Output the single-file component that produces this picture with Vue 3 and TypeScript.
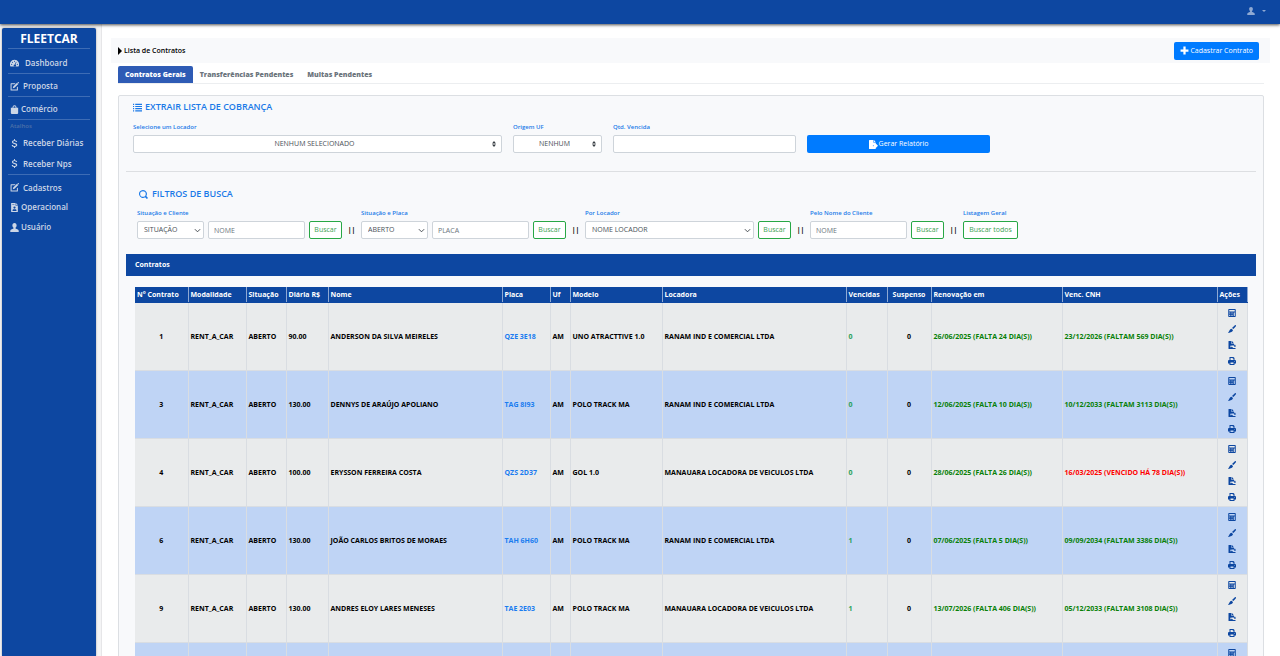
<script setup lang="ts">
import { ref } from 'vue'

interface Contract {
  id: number
  rate: string
  name: string
  plate: string
  model: string
  owner: string
  due: number
  renewal: string
  license: string
  expired?: boolean
}

interface MenuItem {
  label: string
  icon: string
  kind: string
}

const RANAM = 'RANAM IND E COMERCIAL LTDA'
const MANAUARA = 'MANAUARA LOCADORA DE VEICULOS LTDA'

const icons: Record<string, string> = {
  user: 'M8 0C5.600 0 4.200 1.800 4.200 4.200c0 1.800.8 3.400 2 4.300v1.200L2.200 11.400C1 12 .500 12.800.500 14v2h15v-2c0-1.200-.5-2-1.700-2.600l-4-1.700V8.500c1.200-.9 2-2.500 2-4.300C11.800 1.800 10.400 0 8 0z',
  gauge: 'M8 1.500a8 8 0 0 0-7 12h14a8 8 0 0 0-7-12zM8 3a1 1 0 1 1 0 2 1 1 0 0 1 0-2zM3 8.500a1 1 0 1 1 0 2 1 1 0 0 1 0-2zM4.500 4.800a1 1 0 1 1 0 2 1 1 0 0 1 0-2zM13 8.500a1 1 0 1 1 0 2 1 1 0 0 1 0-2zM10.600 5l1 .4-1.800 4.700a2 2 0 1 1-1.200-.4z',
  edit: 'M2 2h8L8.300 3.800H2.800v9.400h9.400V9.500L14 7.800V14a1 1 0 0 1-1 1H2a1 1 0 0 1-1-1V3a1 1 0 0 1 1-1zM12.500 1.200l2.300 2.300-6.800 6.800-3 .7.700-3zM13.200.500l.500-.4a1 1 0 0 1 1.200 0l1 1a1 1 0 0 1 0 1.300l-.4.400z',
  bag: 'M4.500 5V4a3.500 3.500 0 0 1 7 0v1H14.500v9a2 2 0 0 1-2 2h-9a2 2 0 0 1-2-2V5zm1.600 0h3.800V4a1.900 1.900 0 0 0-3.800 0z',
  dollar: 'M7.200 0h1.600v2c2 .2 3.600 1.200 3.900 3.200h-2.200c-.3-1-1.100-1.500-2.500-1.500-1.300 0-2.200.500-2.200 1.500 0 1.100 1.100 1.300 2.700 1.700 2.200.500 4.400 1.200 4.400 3.700 0 2-1.800 3.300-4.100 3.500V16H7.200v-1.900c-2.400-.2-4-1.500-4.200-3.600h2.200c.2 1.200 1.300 1.900 2.800 1.900s2.600-.6 2.600-1.700c0-1.200-1.200-1.600-2.900-2-2.100-.5-4.200-1.200-4.200-3.500C3.500 3.400 5.100 2.200 7.200 2z',
  fileUser: 'M2 0h8v5h4v10a1 1 0 0 1-1 1H3a1 1 0 0 1-1-1zm9 0 3 4h-3zM8 6a2 2 0 1 0 0 4 2 2 0 0 0 0-4zM4.500 14h7v-1c0-1.300-1-2-2-2h-3c-1 0-2 .7-2 2zM4 2v1h4V2z',
  list: 'M0 1.500h2v2H0zm4 0h12v2H4zM0 5.300h2v2H0zm4 0h12v2H4zM0 9.100h2v2H0zm4 0h12v2H4zM0 12.900h2v2H0zm4 0h12v2H4z',
  search: 'M7 0a7 7 0 1 0 3.800 12.900L14 16l2-2-3-3.300A7 7 0 0 0 7 0zm0 2a5 5 0 1 1 0 10A5 5 0 0 1 7 2z',
  plus: 'M6 1h4v5h5v4h-5v5H6v-5H1V6h5z',
  export: 'M1 0h7v5h4v4H7v2h5v4a1 1 0 0 1-1 1H1a1 1 0 0 1-1-1V1a1 1 0 0 1 1-1zm8 0 3 4H9zm3 6 4 4-4 4v-3H8V9h4z',
  calculator: 'M2 0h12a1.500 1.500 0 0 1 1.500 1.500v13A1.500 1.500 0 0 1 14 16H2a1.500 1.500 0 0 1-1.500-1.500v-13A1.500 1.500 0 0 1 2 0zm.500 2v3h11V2zm0 5v2h2V7zm4.500 0v2h2V7zm4.500 0v7h2V7zm-9 4.500v2.500h2v-2.500zm4.500 0v2.500h2v-2.500z',
  brush: 'M15.500.500c.7.800.6 1.500 0 2.400L10.800 8 8 6 13.300.900c.8-.8 1.500-1.100 2.200-.4zM7 7.400l2.900 2.500c-.2 2.600-2.500 4.300-4.600 4.700C3.600 15 2 15.800 0 16c.800-1.200 1.700-2.700 2.400-4.100C3.400 9.600 4.800 7.800 7 7.400z',
  sign: 'M1.500 0H7v6h5v2.500l-1.500 1.200-1-1-2 1.500-1.500-2-2 4.500h1.500l1-1.500 1 1.500h2l1 1.300H15V16H2a1 1 0 0 1-1-1V.500zM8 0l4 4.800H8zm5 7 2 1.200v4h-1.500L12 10z',
  printer: 'M3 0h8l2 2v4h1a2 2 0 0 1 2 2v5h-3v3H3v-3H0V8a2 2 0 0 1 2-2h1zm2 2v4h6V3.500H9.500V2zm0 9v3h6v-3zm8-3.200a.8.8 0 1 0 0 1.600.8.8 0 0 0 0-1.600z',
}

const actions = [
  { icon: 'calculator', label: 'Calcular' },
  { icon: 'brush', label: 'Editar' },
  { icon: 'sign', label: 'Assinar' },
  { icon: 'printer', label: 'Imprimir' },
]

const menu: MenuItem[] = [
  { label: 'Dashboard', icon: 'gauge', kind: 'lined wide' },
  { label: 'Proposta', icon: 'edit', kind: 'lined' },
  { label: 'Comércio', icon: 'bag', kind: 'lined narrow' },
  { label: 'Atalhos', icon: '', kind: 'caption' },
  { label: 'Receber Diárias', icon: 'dollar', kind: 'shortcut' },
  { label: 'Receber Nps', icon: 'dollar', kind: 'shortcut last' },
  { label: 'Cadastros', icon: 'edit', kind: 'spaced' },
  { label: 'Operacional', icon: 'fileUser', kind: 'narrow' },
  { label: 'Usuário', icon: 'user', kind: 'narrow' },
]

const columns: [string, number][] = [
  ['N° Contrato', 53], ['Modalidade', 58], ['Situação', 40], ['Diária R$', 42], ['Nome', 174],
  ['Placa', 48], ['Uf', 20], ['Modelo', 92], ['Locadora', 184], ['Vencidas', 41],
  ['Suspenso', 44], ['Renovação em', 131], ['Venc. CNH', 155], ['Ações', 30],
]

const contracts: Contract[] = [
  { id: 1, rate: '90.00', name: 'ANDERSON DA SILVA MEIRELES', plate: 'QZE 3E18', model: 'UNO ATRACTTIVE 1.0', owner: RANAM, due: 0, renewal: '26/06/2025 (FALTA 24 DIA(S))', license: '23/12/2026 (FALTAM 569 DIA(S))' },
  { id: 3, rate: '130.00', name: 'DENNYS DE ARAÚJO APOLIANO', plate: 'TAG 8I93', model: 'POLO TRACK MA', owner: RANAM, due: 0, renewal: '12/06/2025 (FALTA 10 DIA(S))', license: '10/12/2033 (FALTAM 3113 DIA(S))' },
  { id: 4, rate: '100.00', name: 'ERYSSON FERREIRA COSTA', plate: 'QZS 2D37', model: 'GOL 1.0', owner: MANAUARA, due: 0, renewal: '28/06/2025 (FALTA 26 DIA(S))', license: '16/03/2025 (VENCIDO HÁ 78 DIA(S))', expired: true },
  { id: 6, rate: '130.00', name: 'JOÃO CARLOS BRITOS DE MORAES', plate: 'TAH 6H60', model: 'POLO TRACK MA', owner: RANAM, due: 1, renewal: '07/06/2025 (FALTA 5 DIA(S))', license: '09/09/2034 (FALTAM 3386 DIA(S))' },
  { id: 9, rate: '130.00', name: 'ANDRES ELOY LARES MENESES', plate: 'TAE 2E03', model: 'POLO TRACK MA', owner: MANAUARA, due: 1, renewal: '13/07/2026 (FALTA 406 DIA(S))', license: '05/12/2033 (FALTAM 3108 DIA(S))' },
]

const tabs = ['Contratos Gerais', 'Transferências Pendentes', 'Multas Pendentes']
const activeTab = ref(0)
</script>

<template>
  <div class="app">
    <header class="topbar">
      <button class="account" type="button" aria-label="Conta">
        <svg class="icon" viewBox="0 0 16 16"><path :d="icons.user" /></svg>
        <span class="caret"></span>
      </button>
    </header>

    <div class="body">
      <nav class="sidebar">
        <div class="brand">FLEETCAR</div>
        <template v-for="item in menu" :key="item.label">
          <div v-if="!item.icon" class="caption">{{ item.label }}</div>
          <a v-else href="#" class="item" :class="item.kind">
            <svg class="icon" viewBox="0 0 16 16"><path fill-rule="evenodd" :d="icons[item.icon]" /></svg>
            <span>{{ item.label }}</span>
          </a>
        </template>
      </nav>

      <main class="main">
        <div class="page-head">
          <h1><span class="pointer"></span>Lista de Contratos</h1>
          <button class="primary" type="button">
            <svg class="icon" viewBox="0 0 16 16"><path :d="icons.plus" /></svg>Cadastrar Contrato
          </button>
        </div>

        <div class="tabs" role="tablist">
          <button
            v-for="(tab, i) in tabs" :key="tab" type="button" role="tab"
            :aria-selected="activeTab === i" :class="{ active: activeTab === i }" @click="activeTab = i"
          >{{ tab }}</button>
        </div>

        <section class="card">
          <form class="report" @submit.prevent>
            <h2><svg class="icon" viewBox="0 0 16 16"><path :d="icons.list" /></svg>EXTRAIR LISTA DE COBRANÇA</h2>
            <div class="report-grid">
              <div class="field">
                <label for="locador">Selecione um Locador</label>
                <div class="picker">
                  <select id="locador"><option>NENHUM SELECIONADO</option></select>
                  <svg viewBox="0 0 4 6"><path d="M2 0 4 2.500H0zM2 6 0 3.500h4z" /></svg>
                </div>
              </div>
              <div class="field">
                <label for="uf">Origem UF</label>
                <div class="picker">
                  <select id="uf"><option>NENHUM</option></select>
                  <svg viewBox="0 0 4 6"><path d="M2 0 4 2.500H0zM2 6 0 3.500h4z" /></svg>
                </div>
              </div>
              <div class="field">
                <label for="qtd">Qtd. Vencida</label>
                <input id="qtd" type="text" />
              </div>
              <button class="primary" type="submit">
                <svg class="icon" viewBox="0 0 16 16"><path :d="icons.export" /></svg>Gerar Relatório
              </button>
            </div>
          </form>

          <hr />

          <form class="filters" @submit.prevent>
            <h2><svg class="icon" viewBox="0 0 16 16"><path fill-rule="evenodd" :d="icons.search" /></svg>FILTROS DE BUSCA</h2>
            <div class="filter-row">
              <div class="field">
                <label for="sit-cliente">Situação e Cliente</label>
                <div class="group">
                  <div class="chevron short">
                    <select id="sit-cliente"><option>SITUAÇÃO</option></select>
                    <svg viewBox="0 0 8 5"><path d="m1 1 3 3 3-3" /></svg>
                  </div>
                  <input type="text" placeholder="NOME" aria-label="Nome" />
                  <button class="search" type="button">Buscar</button>
                </div>
              </div>
              <span class="sep">||</span>
              <div class="field">
                <label for="sit-placa">Situação e Placa</label>
                <div class="group">
                  <div class="chevron short">
                    <select id="sit-placa"><option>ABERTO</option></select>
                    <svg viewBox="0 0 8 5"><path d="m1 1 3 3 3-3" /></svg>
                  </div>
                  <input type="text" placeholder="PLACA" aria-label="Placa" />
                  <button class="search" type="button">Buscar</button>
                </div>
              </div>
              <span class="sep">||</span>
              <div class="field">
                <label for="por-locador">Por Locador</label>
                <div class="group">
                  <div class="chevron long">
                    <select id="por-locador"><option>NOME LOCADOR</option></select>
                    <svg viewBox="0 0 8 5"><path d="m1 1 3 3 3-3" /></svg>
                  </div>
                  <button class="search" type="button">Buscar</button>
                </div>
              </div>
              <span class="sep">||</span>
              <div class="field">
                <label for="nome-cliente">Pelo Nome do Cliente</label>
                <div class="group">
                  <input id="nome-cliente" type="text" placeholder="NOME" />
                  <button class="search" type="button">Buscar</button>
                </div>
              </div>
              <span class="sep">||</span>
              <div class="field">
                <label for="todos">Listagem Geral</label>
                <button id="todos" class="search all" type="button">Buscar todos</button>
              </div>
            </div>
          </form>

          <h3 class="band">Contratos</h3>

          <div class="table-wrap">
            <table>
              <colgroup>
                <col v-for="c in columns" :key="c[0]" :style="{ width: c[1] + 'px' }" />
              </colgroup>
              <thead>
                <tr>
                  <th v-for="c in columns" :key="c[0]" :class="{ center: c[0] === 'Suspenso' }">{{ c[0] }}</th>
                </tr>
              </thead>
              <tbody>
                <tr v-for="c in contracts" :key="c.id">
                  <td class="center">{{ c.id }}</td>
                  <td>RENT_A_CAR</td>
                  <td>ABERTO</td>
                  <td>{{ c.rate }}</td>
                  <td>{{ c.name }}</td>
                  <td><a href="#">{{ c.plate }}</a></td>
                  <td>AM</td>
                  <td>{{ c.model }}</td>
                  <td>{{ c.owner }}</td>
                  <td class="due">{{ c.due }}</td>
                  <td class="center">0</td>
                  <td class="ok">{{ c.renewal }}</td>
                  <td :class="c.expired ? 'late' : 'ok'">{{ c.license }}</td>
                  <td>
                    <div class="actions">
                      <button v-for="a in actions" :key="a.icon" type="button" :aria-label="a.label">
                        <svg class="icon" viewBox="0 0 16 16"><path fill-rule="evenodd" :d="icons[a.icon]" /></svg>
                      </button>
                    </div>
                  </td>
                </tr>
                <tr>
                  <td v-for="n in columns.length - 1" :key="n"></td>
                  <td>
                    <div class="actions">
                      <button v-for="a in actions" :key="a.icon" type="button" :aria-label="a.label">
                        <svg class="icon" viewBox="0 0 16 16"><path fill-rule="evenodd" :d="icons[a.icon]" /></svg>
                      </button>
                    </div>
                  </td>
                </tr>
              </tbody>
            </table>
          </div>
        </section>
      </main>
    </div>
  </div>
</template>

<style>
body {
  margin: 0;
}
</style>

<style scoped>
* {
  box-sizing: border-box;
}

.app {
  display: flex;
  flex-direction: column;
  height: 100vh;
  overflow: hidden;
  background: #f4f4f5;
  color: #000;
  font-family: "Open Sans", "Noto Sans", sans-serif;
  font-size: 7px;
  line-height: 10px;
}

button,
input,
select {
  margin: 0;
  font: inherit;
}

a {
  text-decoration: none;
}

.icon {
  display: block;
  flex: none;
  width: 9px;
  height: 9px;
  fill: currentColor;
}

.topbar {
  position: relative;
  z-index: 1;
  display: flex;
  flex: none;
  align-items: center;
  justify-content: flex-end;
  height: 24px;
  padding: 0 14px 3px;
  background: #0d47a1;
  box-shadow: 0 1px 3px rgba(0, 0, 0, 0.7);
}

.account {
  display: flex;
  align-items: center;
  gap: 7px;
  padding: 0;
  border: 0;
  background: none;
  color: #8fa9d3;
}

.account .icon {
  width: 8px;
  height: 8px;
}

.caret {
  border: 2px solid transparent;
  border-top-color: currentColor;
  border-bottom: 0;
}

.body {
  display: flex;
  flex: 1;
  min-height: 0;
}

.sidebar {
  flex: none;
  width: 94px;
  margin: 4px 5px 0 2px;
  padding: 0 6px;
  border-radius: 2px 2px 0 0;
  background: #0d47a1;
  box-shadow: 0 0 2px rgba(0, 0, 0, 0.4);
  color: #ccd6e6;
  font-size: 8px;
  font-weight: 600;
}

.brand {
  height: 21px;
  border-bottom: 1px solid #3d6cb5;
  color: #fff;
  font-size: 12px;
  font-weight: 700;
  line-height: 22px;
  text-align: center;
}

.item {
  display: flex;
  align-items: center;
  gap: 4px;
  height: 20px;
  padding-left: 2px;
  color: inherit;
  white-space: nowrap;
}

.lined {
  height: 23px;
  padding-top: 2px;
  border-bottom: 1px solid #3d6cb5;
}

.wide {
  height: 25px;
  padding-top: 4px;
  gap: 6px;
}

.narrow {
  gap: 2px;
}

.caption {
  height: 13px;
  padding-left: 2px;
  color: #4c6fa8;
  font-size: 6px;
  line-height: 13px;
}

.shortcut {
  height: 21px;
  padding-bottom: 1px;
  gap: 4px;
}

.last {
  border-bottom: 1px solid #3d6cb5;
}

.spaced {
  height: 22px;
  padding-top: 3px;
}

.main {
  flex: 1;
  min-width: 0;
  overflow: auto;
  scrollbar-width: none;
  padding: 14px 10px 0 9px;
  border-left: 1px solid #e6e6e8;
  background: #fff;
}

.page-head {
  display: flex;
  align-items: center;
  justify-content: space-between;
  height: 25px;
  padding: 0 11px 0 7px;
  background: #f8f9fb;
}

h1 {
  display: flex;
  align-items: center;
  gap: 2px;
  margin: 0;
  font-size: 7px;
  font-weight: 600;
}

.pointer {
  border: 4px solid transparent;
  border-left: 4px solid #000;
  border-right: 0;
}

.primary {
  display: flex;
  align-items: center;
  justify-content: center;
  gap: 1px;
  height: 18px;
  padding: 0 6px;
  border: 0;
  border-radius: 2px;
  background: #007bff;
  color: #fff;
  white-space: nowrap;
}

.tabs {
  display: flex;
  margin: 3px 6px 11px 7px;
  border-bottom: 1px solid #eceef0;
}

.tabs button {
  height: 17px;
  padding: 0 7px;
  border: 0;
  border-radius: 2px 2px 0 0;
  background: none;
  color: #6c757d;
  font-weight: 800;
}

.tabs .active {
  background: #2e5bb5;
  color: #fff;
}

.card {
  margin: 0 6px 0 7px;
  padding: 0 7px;
  border: 1px solid #dcdfe3;
  border-radius: 2px;
  background: #f8f9fb;
}

h2 {
  display: flex;
  align-items: center;
  gap: 3px;
  margin: 0;
  color: #1a79e8;
  font-size: 9px;
  font-weight: 600;
  line-height: 12px;
}

.report {
  padding: 5px 4px 18px 7px;
}

.report-grid {
  display: grid;
  grid-template-columns: 369fr 89fr 183fr 183fr 251fr;
  align-items: end;
  gap: 11px;
  margin-top: 9px;
}

.field {
  display: flex;
  flex-direction: column;
  gap: 3px;
}

label {
  color: #1a79e8;
  font-size: 6px;
  font-weight: 600;
  line-height: 10px;
  white-space: nowrap;
}

input,
select {
  width: 100%;
  height: 18px;
  padding: 0 6px;
  border: 1px solid #ced4da;
  border-radius: 2px;
  background: #fff;
  color: #495057;
}

input::placeholder {
  color: #6c757d;
  opacity: 1;
}

select {
  appearance: none;
}

.picker,
.chevron {
  position: relative;
  display: flex;
}

.picker select {
  padding-right: 12px;
  text-align: center;
  text-align-last: center;
}

.picker svg {
  position: absolute;
  top: 6px;
  right: 6px;
  width: 4px;
  height: 6px;
  fill: #343a40;
  pointer-events: none;
}

.chevron svg {
  position: absolute;
  top: 7px;
  right: 3px;
  width: 7px;
  height: 5px;
  fill: none;
  stroke: #343a40;
  pointer-events: none;
}

hr {
  margin: 0;
  border: 0;
  border-top: 1px solid #dddfe2;
}

.filters {
  padding: 16px 11px 15px;
}

.filters h2 {
  gap: 4px;
  padding-left: 2px;
}

.filter-row {
  display: flex;
  align-items: flex-end;
  margin-top: 8px;
}

.group {
  display: flex;
  gap: 4px;
}

.group input {
  width: 97px;
  padding: 0 5px;
}

.short {
  width: 67px;
}

.long {
  width: 169px;
}

.search {
  width: 33px;
  height: 18px;
  padding: 0;
  border: 1px solid #28a745;
  border-radius: 2px;
  background: #fff;
  color: #3c9f52;
  white-space: nowrap;
}

.all {
  width: 55px;
}

.sep {
  width: 19px;
  font-weight: 700;
  line-height: 18px;
  text-align: center;
}

.band {
  margin: 0;
  padding: 0 9px;
  background: #0d47a1;
  color: #fff;
  font-size: 7px;
  font-weight: 700;
  line-height: 22px;
}

.table-wrap {
  padding: 11px 9px;
}

table {
  width: 100%;
  table-layout: fixed;
  border-collapse: collapse;
  font-weight: 700;
}

th,
td {
  padding: 0 2px;
  border: 1px solid #d9dde2;
  text-align: left;
  white-space: nowrap;
}

th {
  height: 15px;
  border-color: #0d47a1 #8ea9d3;
  background: #0d47a1;
  color: #fff;
}

th:first-child,
td:first-child {
  border-left: 0;
}

td {
  height: 68px;
}

tbody tr:nth-child(odd) {
  background: #e9ebec;
}

tbody tr:nth-child(even) {
  background: #bfd4f5;
}

.center {
  text-align: center;
}

td a {
  color: #1a7cf0;
}

.due {
  color: #28a05a;
}

.ok {
  color: #078007;
}

.late {
  color: #f00;
}

.actions {
  display: flex;
  flex-direction: column;
  align-items: center;
  gap: 8px;
}

.actions button {
  padding: 0;
  border: 0;
  background: none;
  color: #0d47a1;
}

.actions .icon {
  width: 8px;
  height: 8px;
}
</style>
